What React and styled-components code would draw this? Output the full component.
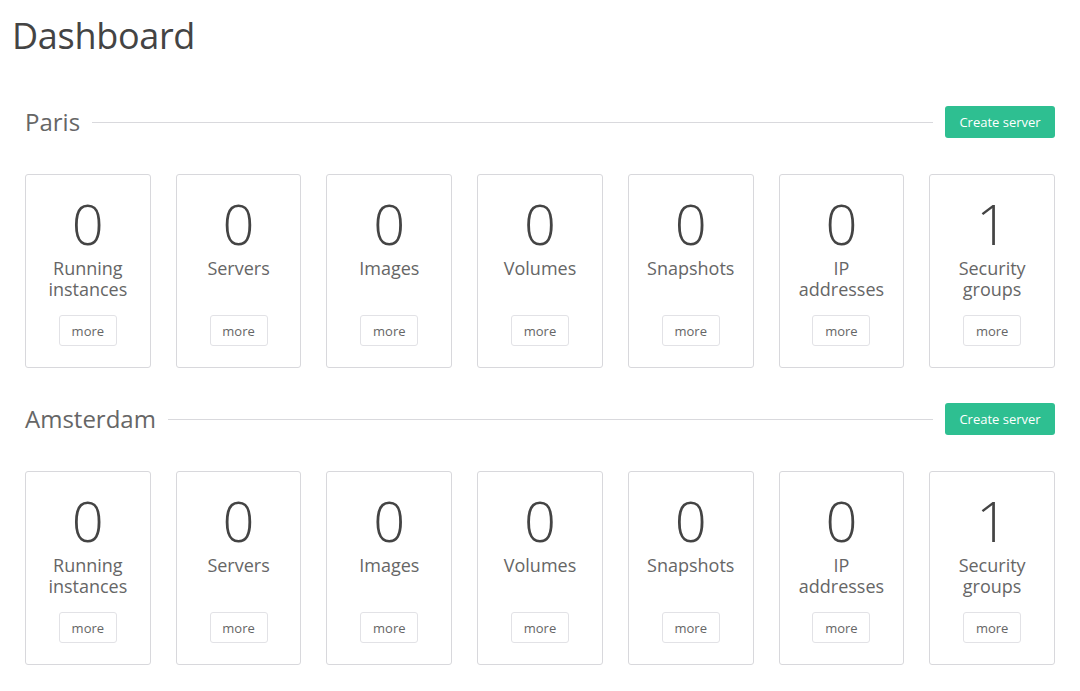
import React from "react";
import styled, { createGlobalStyle } from "styled-components";

const Global = createGlobalStyle`
  html, body { margin: 0; padding: 0; background: #fff; }
  body { font-family: "Open Sans", "Noto Sans", sans-serif; color: #4a4a4a; }
  * { box-sizing: border-box; }
`;

const Page = styled.div`
  width: 1080px;
  padding: 12px 0 24px;
`;

const Title = styled.h1`
  margin: 0 0 0 12px;
  font-size: 36px;
  line-height: 48px;
  font-weight: 400;
  color: #444;
  letter-spacing: -0.3px;
`;

const Section = styled.section`
  padding: 0 25px 0 25px;
  margin-top: ${(p) => p.$top}px;
`;

const Header = styled.div`
  display: flex;
  align-items: center;
  height: 32px;
`;

const Region = styled.h2`
  margin: 0;
  font-size: 24px;
  font-weight: 400;
  color: #666;
  line-height: 32px;
`;

const Rule = styled.div`
  flex: 1;
  height: 1px;
  background: #d9d9dd;
  margin: 0 12px;
`;

const PrimaryButton = styled.button`
  width: 110px;
  height: 32px;
  border: none;
  border-radius: 3px;
  background: #2ebf91;
  color: #fff;
  font-family: inherit;
  font-size: 13px;
  padding: 0;
  cursor: pointer;
`;

const Grid = styled.div`
  display: grid;
  grid-template-columns: repeat(7, 1fr);
  column-gap: 25px;
  margin-top: 36px;
`;

const Card = styled.div`
  height: 194px;
  border: 1px solid #d8d8dc;
  border-radius: 3px;
  display: flex;
  flex-direction: column;
  align-items: center;
  padding-top: 16px;
`;

const Count = styled.div`
  font-size: 56px;
  line-height: 64px;
  font-weight: 300;
  color: #444;
`;

const Label = styled.div`
  font-size: 18px;
  line-height: 21px;
  height: 42px;
  color: #666;
  text-align: center;
  margin-top: 3px;
`;

const MoreButton = styled.button`
  margin-top: 15px;
  width: 58px;
  height: 31px;
  background: #fff;
  border: 1px solid #e2e2e6;
  border-radius: 3px;
  color: #666;
  font-family: inherit;
  font-size: 13px;
  padding: 0;
  cursor: pointer;
`;

const stats = [
  ["Running", "instances"],
  ["Servers"],
  ["Images"],
  ["Volumes"],
  ["Snapshots"],
  ["IP", "addresses"],
  ["Security", "groups"],
];

const regions = [
  { name: "Paris", counts: [0, 0, 0, 0, 0, 0, 1], top: 46 },
  { name: "Amsterdam", counts: [0, 0, 0, 0, 0, 0, 1], top: 35 },
];

export default function App() {
  return (
    <Page>
      <Global />
      <Title>Dashboard</Title>
      {regions.map((r) => (
        <Section key={r.name} $top={r.top}>
          <Header>
            <Region>{r.name}</Region>
            <Rule />
            <PrimaryButton>Create server</PrimaryButton>
          </Header>
          <Grid>
            {stats.map((lines, i) => (
              <Card key={i}>
                <Count>{r.counts[i]}</Count>
                <Label>
                  {lines.map((l, j) => (
                    <div key={j}>{l}</div>
                  ))}
                </Label>
                <MoreButton>more</MoreButton>
              </Card>
            ))}
          </Grid>
        </Section>
      ))}
    </Page>
  );
}
